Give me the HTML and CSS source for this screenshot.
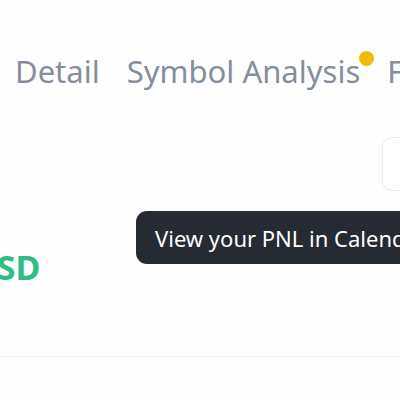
FILE: index.html
```html
<!DOCTYPE html>
<html lang="en">

<head>
    <meta charset="UTF-8">
    <meta name="viewport" content="width=device-width, initial-scale=1.0">
    <link rel="stylesheet" href="styles.css">
    <title>PNL Analysis</title>
</head>

<body>
    <div class="page">
        <nav class="tabs">
            <span class="tab">Detail</span>
            <span class="tab tab-new">Symbol Analysis<span class="dot"></span></span>
            <span class="tab">Funding</span>
        </nav>

        <div class="toolbar">
            <button class="calendar-btn" type="button"></button>
        </div>

        <div class="summary">
            <span class="amount">USD</span>
        </div>

        <hr class="divider">

        <div class="tooltip">View your PNL in Calendar</div>
    </div>
</body>

</html>
```

FILE: styles.css
```css
body {
    margin: 0;
    background-color: #fefefe;
    font-family: "Noto Sans", "Open Sans", sans-serif;
    overflow: hidden;
    width: 400px;
    height: 400px;
}

.page {
    position: relative;
    width: 480px;
    margin-left: -20px;
}

.tabs {
    display: flex;
    gap: 27px;
    padding: 51px 0 0 35px;
    white-space: nowrap;
}

.tab {
    position: relative;
    font-size: 31px;
    line-height: 40px;
    color: #848e9c;
}

.dot {
    position: absolute;
    top: 0;
    right: -14px;
    width: 15px;
    height: 15px;
    border-radius: 50%;
    background-color: #f0b90b;
}

.toolbar {
    display: flex;
    justify-content: flex-end;
    margin-top: 46px;
}

.calendar-btn {
    width: 78px;
    height: 54px;
    border: 1px solid #eaecef;
    border-radius: 10px;
    background-color: #fff;
}

.summary {
    margin-top: 53px;
    margin-left: -9px;
}

.amount {
    font-size: 34px;
    font-weight: 700;
    color: #2ebd85;
}

.divider {
    margin: 66px 0 0;
    border: none;
    border-top: 1px solid #f0f1f2;
}

.tooltip {
    position: absolute;
    top: 211px;
    left: 156px;
    height: 53px;
    padding: 0 19px;
    display: flex;
    align-items: center;
    background-color: #252a33;
    border-radius: 11px;
    color: #fff;
    font-size: 22px;
    white-space: nowrap;
}
```
